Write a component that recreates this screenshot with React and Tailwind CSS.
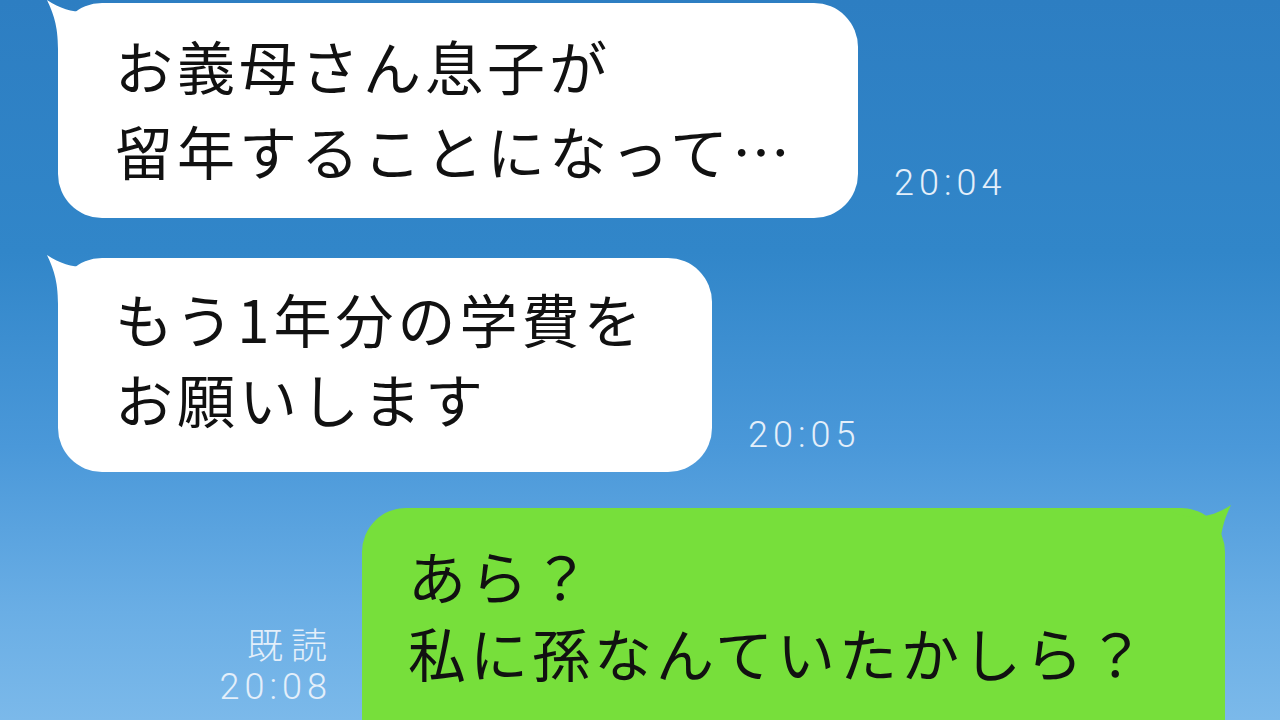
import React from "react";

const jp = { fontFamily: '"Noto Sans CJK JP", "Noto Sans", sans-serif' };
const num = { fontFamily: 'Roboto, "Liberation Sans", sans-serif' };

function TailLeft({ color }) {
  return (
    <svg
      className="absolute left-[-12px] top-[-4px]"
      width="64"
      height="56"
      viewBox="0 0 64 56"
    >
      <path
        d="M1,1 C7,14 12,26 12,50 L64,50 L64,6 C50,14 26,18 1,1 Z"
        fill={color}
      />
    </svg>
  );
}

function TailRight({ color }) {
  return (
    <svg
      className="absolute right-[-7px] top-[-4px]"
      width="64"
      height="56"
      viewBox="0 0 64 56"
    >
      <path
        d="M63,1 C57,14 52,26 52,50 L0,50 L0,6 C14,14 38,18 63,1 Z"
        fill={color}
      />
    </svg>
  );
}

export default function App() {
  return (
    <div
      className="w-[1280px] h-[720px] overflow-hidden bg-[linear-gradient(180deg,#2d7ec2_0%,#3186c9_35%,#4a98d9_62%,#6aaee5_85%,#7bb9ea_100%)]"
    >
      <div className="flex flex-col pl-[58px] pt-[3px]">
        {/* Message 1 */}
        <div className="flex items-end">
          <div className="relative w-[800px] h-[215px] bg-white rounded-[44px]">
            <TailLeft color="#ffffff" />
            <div
              className="relative pl-[57px] pt-[20px] text-[58px] leading-[85px] tracking-[4px] text-[#111]"
              style={jp}
            >
              <div>お義母さん息子が</div>
              <div>留年することになって…</div>
            </div>
          </div>
          <div
            className="ml-[36px] mb-[17px] text-[36px] leading-none font-light tracking-[5px] text-[#e4effa]"
            style={num}
          >
            20:04
          </div>
        </div>

        {/* Message 2 */}
        <div className="flex items-end mt-[40px]">
          <div className="relative w-[654px] h-[214px] bg-white rounded-[44px]">
            <TailLeft color="#ffffff" />
            <div
              className="relative pl-[57px] pt-[20px] text-[58px] leading-[80px] tracking-[4px] text-[#111]"
              style={jp}
            >
              <div>もう1年分の学費を</div>
              <div>お願いします</div>
            </div>
          </div>
          <div
            className="ml-[36px] mb-[19px] text-[36px] leading-none font-light tracking-[5px] text-[#e4effa]"
            style={num}
          >
            20:05
          </div>
        </div>

        {/* Message 3 */}
        <div className="flex items-start justify-end mt-[36px] pr-[55px]">
          <div className="flex flex-col items-end mr-[35px] mt-[115px] text-[#e4effa]">
            <div
              className="text-[36px] leading-[40px] tracking-[8px] mr-[-8px] font-light"
              style={jp}
            >
              既読
            </div>
            <div
              className="mt-[6px] text-[36px] leading-none font-light tracking-[5px] mr-[-5px]"
              style={num}
            >
              20:08
            </div>
          </div>
          <div className="relative w-[863px] h-[260px] bg-[#77df3b] rounded-[44px]">
            <TailRight color="#77df3b" />
            <div
              className="relative pl-[46px] pt-[29px] text-[58px] leading-[77px] tracking-[4px] text-[#111]"
              style={jp}
            >
              <div>あら？</div>
              <div>私に孫なんていたかしら？</div>
            </div>
          </div>
        </div>
      </div>
    </div>
  );
}
